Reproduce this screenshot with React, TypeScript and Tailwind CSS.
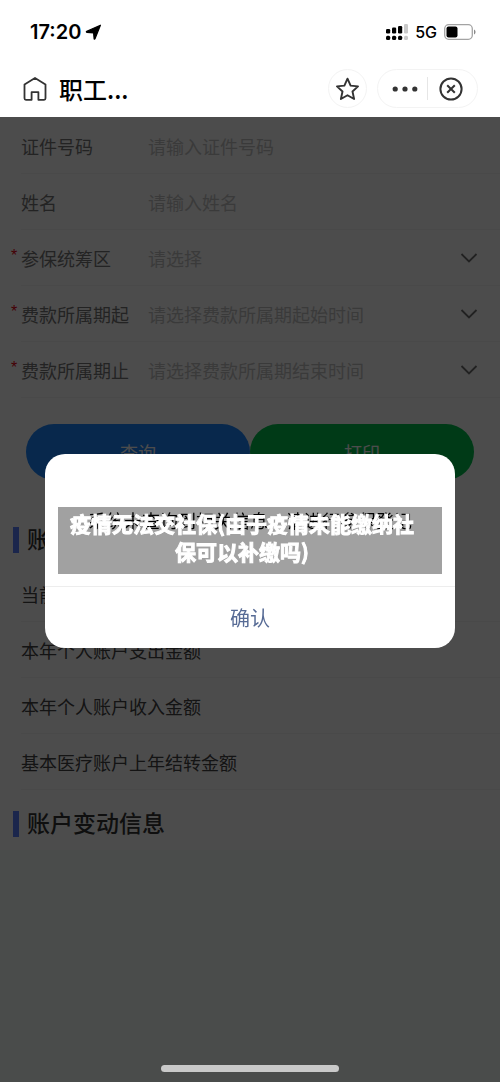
import { useState } from 'react'

type Field = {
  id: string
  label: string
  placeholder: string
  required?: boolean
}

const FIELDS: Field[] = [
  { id: 'id-number', label: '证件号码', placeholder: '请输入证件号码' },
  { id: 'name', label: '姓名', placeholder: '请输入姓名' },
  { id: 'region', label: '参保统筹区', placeholder: '请选择', required: true },
  { id: 'period-start', label: '费款所属期起', placeholder: '请选择费款所属期起始时间', required: true },
  { id: 'period-end', label: '费款所属期止', placeholder: '请选择费款所属期结束时间', required: true },
]

const ACCOUNT_ROWS = ['当前账户余额', '本年个人账户支出金额', '本年个人账户收入金额', '基本医疗账户上年结转金额']

function StatusBar() {
  return (
    <div className="flex h-16 items-center justify-between pr-6 pl-[30px] font-['Inter','Noto_Sans_CJK_SC',sans-serif] text-black">
      <div className="flex items-center gap-1">
        <span className="text-[20px] leading-6 font-semibold">17:20</span>
        <svg className="size-4" viewBox="0 0 16 16" fill="currentColor" stroke="currentColor" strokeWidth="1.200" strokeLinejoin="round">
          <path d="M15.400 1.200 10 14.800q-.5.900-.9-.1L8.600 8.900 2 8.400q-1.200-.4-.2-1.100z" />
        </svg>
      </div>
      <div className="flex items-center gap-[7px]">
        <svg className="h-4 w-[22px]" viewBox="0 0 22 16" fill="currentColor">
          <rect x="0" y="5" width="4.200" height="4.500" rx="1.200" />
          <rect x="6" y="3.500" width="4.200" height="6" rx="1.200" />
          <rect x="12" y="2" width="4.200" height="7.500" rx="1.200" />
          <rect x="18" y="0" width="4" height="9.500" rx="1.200" fill="#c9c9c9" />
          <rect x="0" y="11.700" width="4.200" height="4.200" rx="1.500" />
          <rect x="6" y="11.700" width="4.200" height="4.200" rx="1.500" />
          <rect x="12" y="11.700" width="4.200" height="4.200" rx="1.500" />
          <rect x="18" y="11.700" width="4" height="4.200" rx="1.500" fill="#c9c9c9" />
        </svg>
        <span className="text-[16px] leading-6 font-medium">5G</span>
        <svg className="h-4 w-8" viewBox="0 0 32 16">
          <rect x=".7" y=".7" width="27.600" height="14.600" rx="4" fill="none" stroke="#a3a3a3" strokeWidth="1.300" />
          <rect x="2.500" y="2.500" width="11" height="11" rx="2" fill="#000" />
          <path d="M30 5.500c2 .8 2 4.200 0 5z" fill="#8a8a8a" />
        </svg>
      </div>
    </div>
  )
}

function NavBar() {
  return (
    <div className="flex h-[53px] items-start justify-between pt-[5px] pr-[22px] pl-[23px]">
      <div className="flex h-10 items-center gap-3">
        <button type="button" aria-label="首页">
          <svg className="size-6" viewBox="0 0 24 24" fill="none" stroke="#333" strokeWidth="1.800" strokeLinejoin="round">
            <path d="M12 1 1.500 7.600v13.700c0 .9.500 1.500 1.400 1.500h5.700v-7.600h6.800v7.600h5.700c.9 0 1.400-.6 1.400-1.500V7.600z" />
          </svg>
        </button>
        <h1 className="text-[24px] leading-8 font-medium text-black">职工...</h1>
      </div>
      <div className="flex items-center gap-[10px]">
        <button
          type="button"
          aria-label="收藏"
          className="flex size-[39px] items-center justify-center rounded-full border border-[#f3f3f3]"
        >
          <svg className="size-6" viewBox="0 0 24 24" fill="none" stroke="#333" strokeWidth="1.900" strokeLinejoin="round">
            <path d="m11.500 1.700 3.100 6.900 7.400.8-5.500 5.100 1.600 7.500-6.600-3.800-6.600 3.800 1.600-7.500L1 9.400l7.400-.8z" />
          </svg>
        </button>
        <div className="flex h-[39px] w-[101px] items-center rounded-full border border-[#f3f3f3] px-[14px]">
          <button type="button" aria-label="更多" className="flex h-full flex-1 items-center">
            <svg className="h-[6px] w-[26px]" viewBox="0 0 26 6" fill="#333">
              <circle cx="3.200" cy="3" r="2.600" />
              <circle cx="13" cy="3" r="2.600" />
              <circle cx="22.800" cy="3" r="2.600" />
            </svg>
          </button>
          <span className="h-[23px] w-px bg-[#e6e6e6]" />
          <button type="button" aria-label="关闭" className="flex h-full items-center pl-[11px]">
            <svg className="size-6" viewBox="0 0 24 24" fill="none" stroke="#333" strokeWidth="2">
              <circle cx="12" cy="12" r="10.600" />
              <path d="m8.200 8.200 7.600 7.600M15.800 8.200l-7.600 7.600" />
            </svg>
          </button>
        </div>
      </div>
    </div>
  )
}

function FieldRow({ id, label, placeholder, required }: Field) {
  return (
    <div className="flex h-14">
      <span className="w-[21px] shrink-0 pt-4 pl-[11px] font-['Liberation_Sans',sans-serif] text-[16px] leading-5 text-[#e60012]">
        {required && '*'}
      </span>
      <div className="flex min-w-0 flex-1 items-center border-b border-[#f5f5f5] pr-[22px]">
        <label htmlFor={id} className="w-[127px] shrink-0 text-[#777]">
          {label}
        </label>
        {required ? (
          <>
            <select id={id} className="min-w-0 flex-1 appearance-none bg-transparent text-[#c4c4c4]">
              <option>{placeholder}</option>
            </select>
            <svg className="h-[10px] w-[18px]" viewBox="0 0 18 10" fill="none" stroke="#707070" strokeWidth="1.800">
              <path d="m1.500 1 7.500 7.500L16.500 1" />
            </svg>
          </>
        ) : (
          <input id={id} placeholder={placeholder} className="min-w-0 flex-1 placeholder:text-[#c4c4c4]" />
        )}
      </div>
    </div>
  )
}

function SectionTitle({ children }: { children: string }) {
  return (
    <div className="flex h-[60px] items-center gap-2 pt-2 pl-[13px]">
      <span className="h-[26px] w-[6px] bg-[#5b80ff]" />
      <h2 className="pb-1 text-[23px] leading-8 font-medium text-[#333]">{children}</h2>
    </div>
  )
}

function Notice({ onConfirm }: { onConfirm: () => void }) {
  return (
    <div className="fixed inset-0 z-20 flex items-center justify-center px-[45px] pt-5">
      <div role="dialog" aria-modal="true" className="w-full overflow-hidden rounded-[20px] bg-white">
        <div className="relative px-3 py-[52px] text-center">
          <p className="text-[18px] leading-7 text-black">系统未查询到相关信息，请进行参保登记</p>
          <div className="absolute inset-x-[13px] top-[53px] h-[67px] bg-black/37 pt-[2px] pr-[16px] text-[21px] leading-7 font-bold whitespace-nowrap text-white [-webkit-text-stroke:1px_white]">
            疫情无法交社保(由于疫情未能缴纳社
            <br />
            保可以补缴吗)
          </div>
        </div>
        <button
          type="button"
          onClick={onConfirm}
          className="h-[62px] w-full border-t border-[#ededed] text-[20px] text-[#576b95]"
        >
          确认
        </button>
      </div>
    </div>
  )
}

export default function App() {
  const [open, setOpen] = useState(true)

  return (
    <div className="flex min-h-screen flex-col bg-[#f7fdfa] font-['Noto_Sans_CJK_SC',sans-serif] text-[18px] leading-7">
      <header className="bg-white">
        <StatusBar />
        <NavBar />
      </header>
      <main className="relative flex-1">
        <div className="bg-white">
          <form className="pt-px" onSubmit={(e) => e.preventDefault()}>
            {FIELDS.map((field) => (
              <FieldRow key={field.id} {...field} />
            ))}
            <div className="flex px-[26px] py-[26px] text-white">
              <button type="submit" className="h-14 flex-1 rounded-full bg-[#1b86ff]">
                查询
              </button>
              <button type="button" className="h-14 flex-1 rounded-full bg-[#00c24f]">
                打印
              </button>
            </div>
          </form>

          <SectionTitle>账户基本信息</SectionTitle>
          <ul className="pl-[21px] text-[#444]">
            {ACCOUNT_ROWS.map((row) => (
              <li key={row} className="flex h-14 items-center border-b border-[#f5f5f5]">
                {row}
              </li>
            ))}
          </ul>
          <SectionTitle>账户变动信息</SectionTitle>
        </div>
        {open && <div className="absolute inset-0 bg-black/70" />}
      </main>
      {/* home indicator */}
      <div className="fixed inset-x-0 bottom-[10px] z-10 mx-auto h-[7px] w-[178px] rounded-full bg-[#c9c9c9]" />
      {open && <Notice onConfirm={() => setOpen(false)} />}
    </div>
  )
}
